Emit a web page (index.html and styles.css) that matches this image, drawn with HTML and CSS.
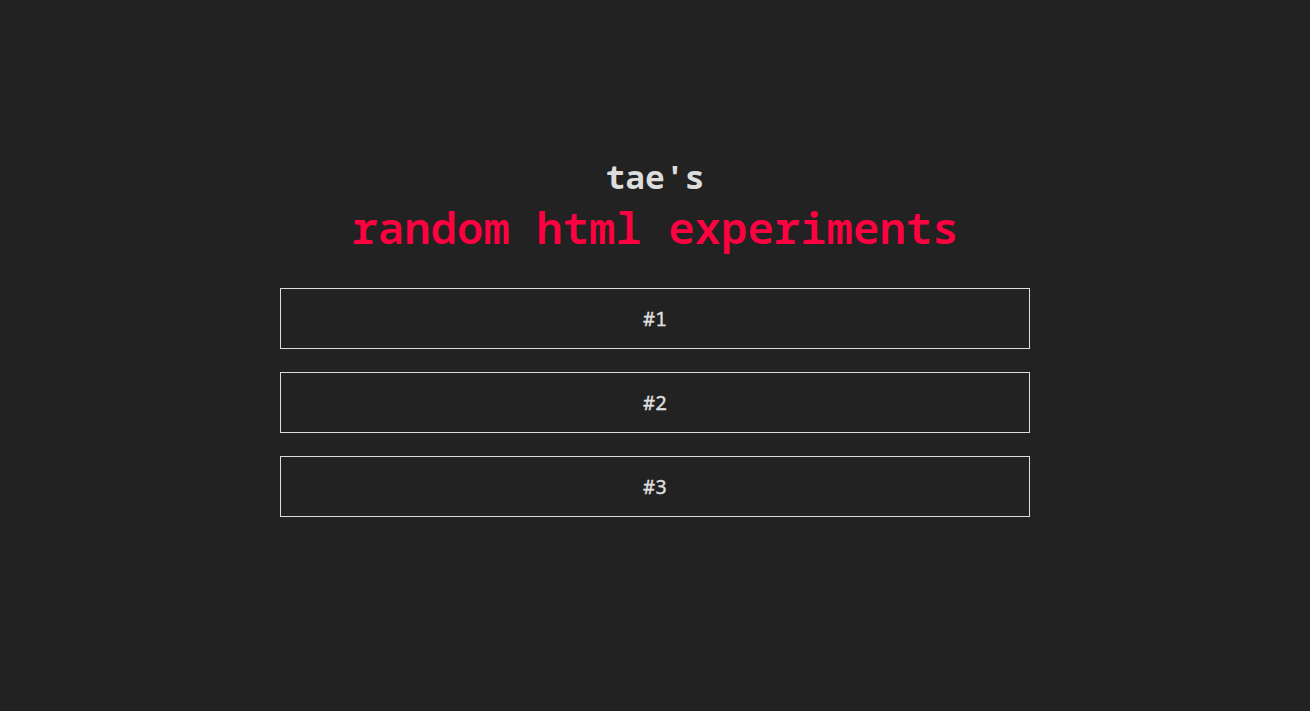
FILE: index.html
```html
<!DOCTYPE html>
<html>
<head>
<meta charset="utf-8">
<link rel="stylesheet" href="styles.css">
</head>
<body>
<main class="page">
  <header class="head">
    <div class="owner">tae's</div>
    <h1 class="title">random html experiments</h1>
  </header>
  <nav class="list">
    <a class="item" href="#">#1</a>
    <a class="item" href="#">#2</a>
    <a class="item" href="#">#3</a>
  </nav>
</main>
</body>
</html>
```
FILE: styles.css
```css
html, body {
  margin: 0;
  padding: 0;
  background: #222222;
  height: 100%;
}
body {
  font-family: "Noto Sans Mono", "DejaVu Sans Mono", monospace;
  color: #dddddd;
}
.page {
  display: flex;
  flex-direction: column;
  align-items: center;
  padding-top: 155px;
}
.head {
  text-align: center;
}
.owner {
  font-size: 33px;
  font-weight: bold;
  line-height: 44px;
  color: #dddddd;
}
.title {
  margin: 0;
  font-size: 44px;
  font-weight: 600;
  line-height: 56px;
  color: #ff0040;
}
.list {
  display: flex;
  flex-direction: column;
  gap: 23px;
  margin-top: 33px;
  width: 750px;
}
.item {
  display: flex;
  align-items: center;
  justify-content: center;
  height: 59px;
  border: 1px solid #dddddd;
  color: #e0e0e0;
  text-decoration: none;
  font-size: 20px;
  font-weight: normal;
  -webkit-text-stroke: 0.3px #e0e0e0;
}
```
